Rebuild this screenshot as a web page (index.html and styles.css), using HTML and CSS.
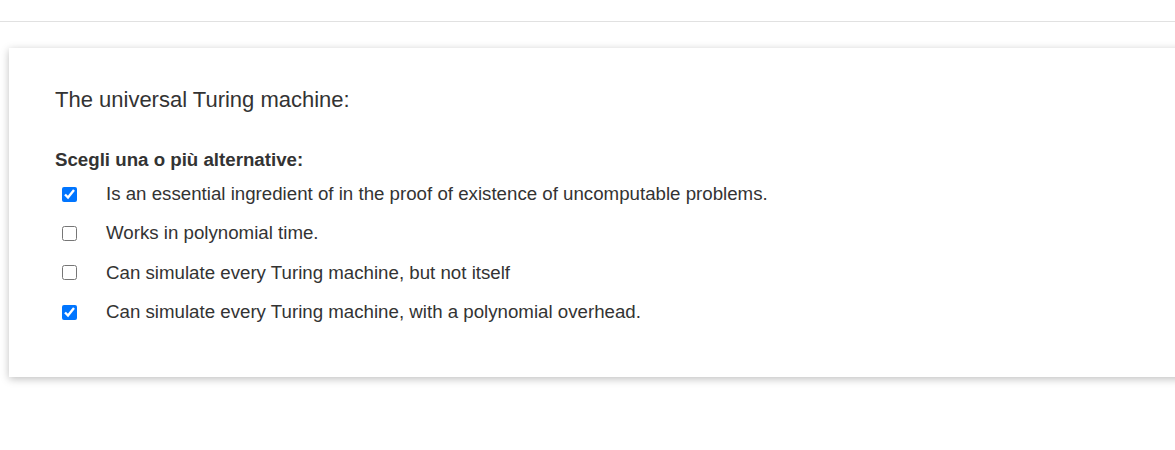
FILE: index.html
```html
<!DOCTYPE html>
<html>
<head>
<meta charset="utf-8">
<link rel="stylesheet" href="styles.css">
</head>
<body>
<div class="topbar"></div>
<div class="card">
  <div class="qtext">The universal Turing machine:</div>
  <div class="prompt">Scegli una o più alternative:</div>
  <div class="answers">
    <label class="opt"><input type="checkbox" checked><span>Is an essential ingredient of in the proof of existence of uncomputable problems.</span></label>
    <label class="opt"><input type="checkbox"><span>Works in polynomial time.</span></label>
    <label class="opt"><input type="checkbox"><span>Can simulate every Turing machine, but not itself</span></label>
    <label class="opt"><input type="checkbox" checked><span>Can simulate every Turing machine, with a polynomial overhead.</span></label>
  </div>
</div>
</body>
</html>
```
FILE: styles.css
```css
html { overflow: hidden; }
html, body { margin: 0; padding: 0; background: #fff; }
body { font-family: "Liberation Sans", Arial, sans-serif; color: #333; padding-bottom: 60px; }
.topbar { height: 21px; border-bottom: 1px solid #e1e1e1; }
.card {
  margin: 26px -40px 0 9px;
  background: #fff;
  box-shadow: 0 2px 8px rgba(0,0,0,0.25);
  padding: 38px 46px 0;
  height: 329px;
  box-sizing: border-box;
}
.qtext { font-size: 22px; line-height: 28px; }
.prompt { font-size: 18.7px; font-weight: bold; margin-top: 33px; line-height: 26px; }
.answers { display: flex; flex-direction: column; gap: 13.4px; margin-top: 8px; }
.opt { display: flex; align-items: center; font-size: 18.7px; line-height: 26px; }
.opt input { width: 15px; height: 15px; margin: 0 29px 0 7px; accent-color: #0075ff; flex: none; }
```
